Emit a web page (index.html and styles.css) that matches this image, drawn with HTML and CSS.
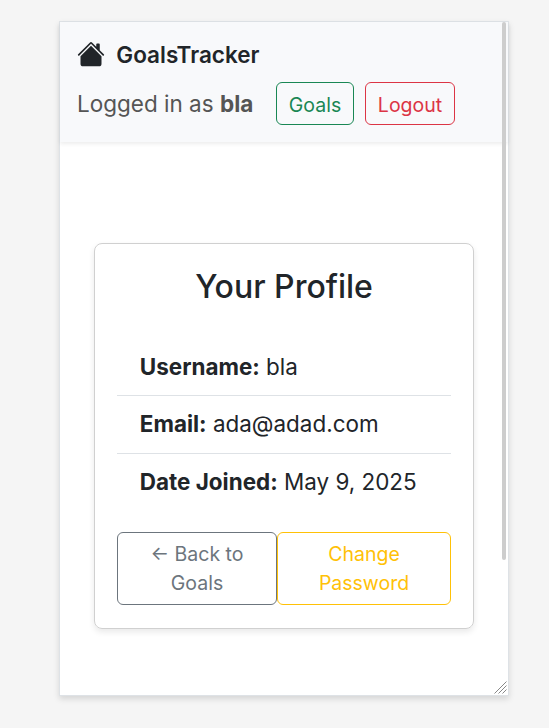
FILE: index.html
```html
<!DOCTYPE html>
<html lang="en">
<head>
<meta charset="utf-8">
<title>GoalsTracker</title>
<link rel="stylesheet" href="styles.css">
</head>
<body>
<div class="frame">
  <header class="navbar">
    <div class="brand">
      <svg class="brand-icon" viewBox="0 0 16 16" fill="currentColor" aria-hidden="true"><path d="M8.707 1.5a1 1 0 0 0-1.414 0L.646 8.146a.5.5 0 0 0 .708.708L8 2.207l6.646 6.647a.5.5 0 0 0 .708-.708L13 5.793V2.500a.5.5 0 0 0-.5-.5h-1a.5.5 0 0 0-.5.5v1.293z"/><path d="m8 3.293 6 6V13.500a1.500 1.500 0 0 1-1.500 1.500h-9A1.500 1.500 0 0 1 2 13.500V9.293z"/></svg>
      <span class="brand-name">GoalsTracker</span>
    </div>
    <div class="account">
      <span class="status">Logged in as <strong>bla</strong></span>
      <a class="btn btn-success">Goals</a>
      <a class="btn btn-danger">Logout</a>
    </div>
  </header>
  <main class="content">
    <section class="card">
      <h2 class="title">Your Profile</h2>
      <ul class="list">
        <li class="item"><strong>Username:</strong> bla</li>
        <li class="item"><strong>Email:</strong> ada@adad.com</li>
        <li class="item"><strong>Date Joined:</strong> May 9, 2025</li>
      </ul>
      <div class="actions">
        <a class="btn btn-secondary">← Back to<br>Goals</a>
        <a class="btn btn-warning">Change<br>Password</a>
      </div>
    </section>
  </main>
  <div class="scroll-thumb"></div>
  <svg class="grip" viewBox="0 0 13 13" aria-hidden="true"><path d="M.5 12.5l12-12M4.500 12.500l8-8M8.500 12.500l4-4"/></svg>
</div>
</body>
</html>
```
FILE: styles.css
```css
* { box-sizing: border-box; }
body {
  margin: 0;
  height: 728px;
  overflow: hidden;
  padding: 21px 0 0 59px;
  background: #f5f5f5;
  color: #212529;
  font: 22.5px/1.5 Inter, "Liberation Sans", sans-serif;
}
strong { font-weight: 700; }
.frame {
  position: relative;
  width: 450px;
  height: 675px;
  border: 1px solid #dee2e6;
  background: #fff;
  box-shadow: 0 3px 6px rgba(0, 0, 0, .13);
}
.navbar {
  height: 120px;
  padding: 16px 17px 0;
  background: #f8f9fb;
  box-shadow: 0 2px 4px rgba(0, 0, 0, .075);
}
.brand { display: flex; align-items: center; height: 34px; }
.brand-icon { width: 28px; height: 28px; margin: -3px 0 0 -.5px; }
.brand-name { margin-left: 11.8px; font-weight: 600; }
.account { display: flex; margin-top: 10px; }
.status { width: 199px; padding-top: 5px; color: #555; white-space: nowrap; }
.btn {
  display: block;
  border: 1px solid;
  border-radius: 6px;
  padding: 7px 11px;
  font-size: 19.5px;
  line-height: 29px;
  text-align: center;
  white-space: nowrap;
}
.account .btn { height: 43px; padding: 8px 0; }
.btn-success { width: 78px; color: #198754; }
.btn-danger { width: 90px; margin-left: 11px; color: #dc3545; }
.content { padding: 101px 34px 0; }
.card {
  width: 380px;
  height: 386px;
  padding: 22px;
  border: 1px solid #d0d0d0;
  border-radius: 8px;
  box-shadow: 0 3px 6px rgba(0, 0, 0, .09);
}
.title {
  margin: 0 0 31.5px;
  padding-top: 1px;
  font-size: 32px;
  font-weight: 500;
  line-height: 40px;
  text-align: center;
}
.list { margin: 0; padding: 0; list-style: none; }
.item { height: 57.6px; padding: 11.2px 22.8px; border-bottom: 1px solid #dee2e6; font-size: 22.45px; line-height: 33.75px; }
.item:last-child { border-bottom: 0; }
.actions { display: flex; margin-top: 20.7px; }
.actions .btn { height: 73px; }
.btn-secondary { width: 160px; color: #6c757d; }
.btn-warning { width: 174px; color: #ffc107; }
.scroll-thumb {
  position: absolute;
  top: 0;
  right: 2px;
  width: 4px;
  height: 538px;
  border-radius: 2px;
  background: #cdcdcd;
}
.grip {
  position: absolute;
  right: 1px;
  bottom: 1px;
  width: 13px;
  height: 13px;
  fill: none;
  stroke: #888;
}
```
